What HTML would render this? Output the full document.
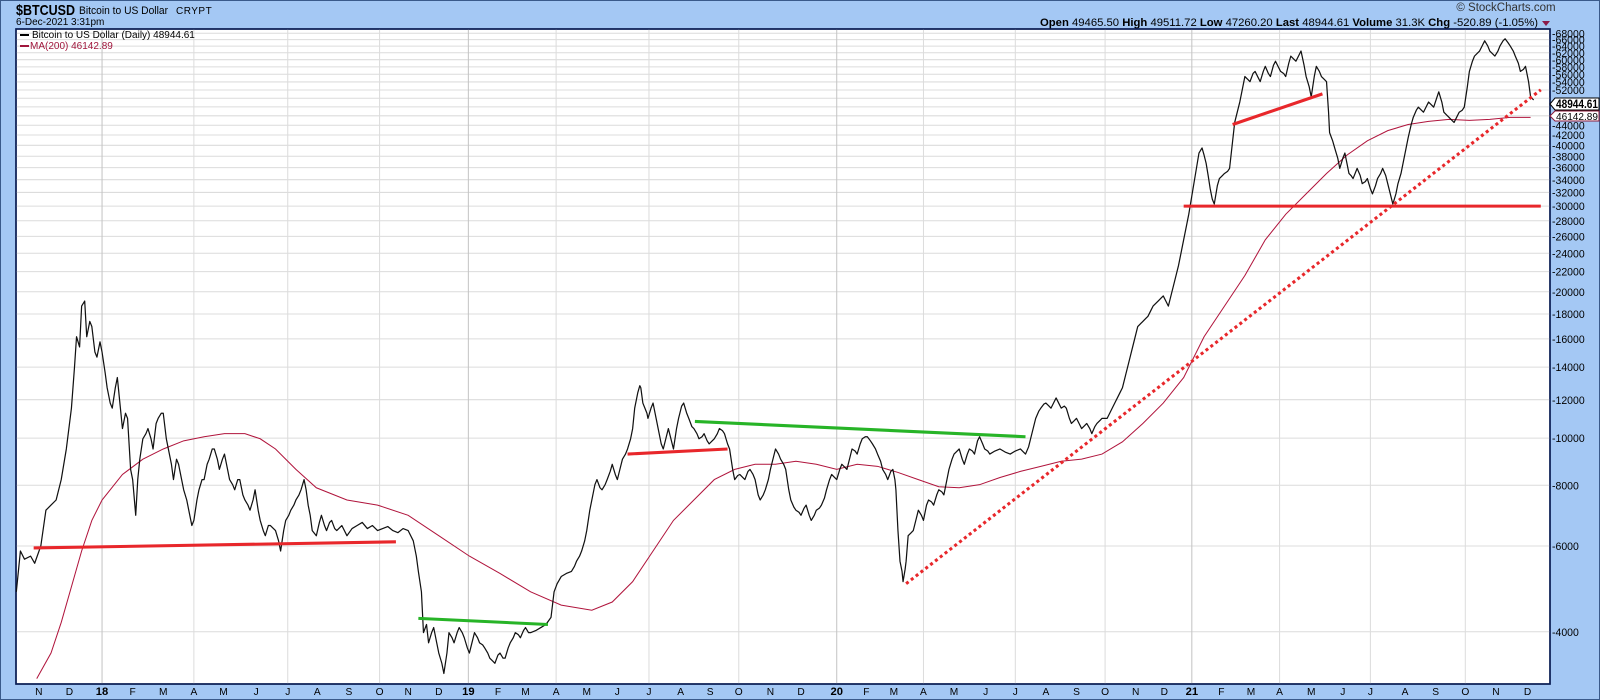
<!DOCTYPE html>
<html><head><meta charset="utf-8"><style>
html,body{margin:0;padding:0;width:1600px;height:700px;overflow:hidden;background:#a4c8f4;}
svg{display:block;font-family:"Liberation Sans",Arial,sans-serif;}
</style></head><body>
<svg width="1600" height="700" viewBox="0 0 1600 700" xmlns="http://www.w3.org/2000/svg">
<rect x="0" y="0" width="1600" height="700" fill="#a4c8f4"/>
<rect x="0.5" y="0.5" width="1599" height="699" fill="none" stroke="#3a5a8a"/>
<text x="16" y="15" font-size="15" font-weight="bold" fill="#000" textLength="59" lengthAdjust="spacingAndGlyphs">$BTCUSD</text>
<text x="79" y="14" font-size="11" fill="#000" textLength="89" lengthAdjust="spacingAndGlyphs">Bitcoin to US Dollar</text>
<text x="176" y="14" font-size="10" fill="#000" letter-spacing="0.5">CRYPT</text>
<text x="16" y="25" font-size="10" fill="#000">6-Dec-2021 3:31pm</text>
<text x="1506" y="11" font-size="11.5" fill="#333" text-anchor="middle">© StockCharts.com</text>
<text x="1040" y="26" font-size="11" fill="#000" textLength="498" lengthAdjust="spacingAndGlyphs"><tspan font-weight="bold">Open</tspan> 49465.50 <tspan font-weight="bold">High</tspan> 49511.72 <tspan font-weight="bold">Low</tspan> 47260.20 <tspan font-weight="bold">Last</tspan> 48944.61 <tspan font-weight="bold">Volume</tspan> 31.3K <tspan font-weight="bold">Chg</tspan> -520.89 (-1.05%)</text>
<path d="M1542 21 L1550 21 L1546 26 Z" fill="#8b1a4a"/>
<rect x="16" y="29" width="1534" height="655" fill="#fff" stroke="#0c1f55" stroke-width="1.5"/>
<g stroke="#dcdcdc" stroke-width="1" transform="matrix(1,0,0,1.0204,0,0)">
<line x1="16" x2="1550" y1="32.6" y2="32.6"/><line x1="16" x2="1550" y1="38.8" y2="38.8"/><line x1="16" x2="1550" y1="45.2" y2="45.2"/><line x1="16" x2="1550" y1="51.7" y2="51.7"/><line x1="16" x2="1550" y1="58.5" y2="58.5"/><line x1="16" x2="1550" y1="65.5" y2="65.5"/><line x1="16" x2="1550" y1="72.8" y2="72.8"/><line x1="16" x2="1550" y1="80.3" y2="80.3"/><line x1="16" x2="1550" y1="88.2" y2="88.2"/><line x1="16" x2="1550" y1="96.3" y2="96.3"/><line x1="16" x2="1550" y1="104.7" y2="104.7"/><line x1="16" x2="1550" y1="113.5" y2="113.5"/><line x1="16" x2="1550" y1="122.7" y2="122.7"/><line x1="16" x2="1550" y1="132.3" y2="132.3"/><line x1="16" x2="1550" y1="142.4" y2="142.4"/><line x1="16" x2="1550" y1="153.1" y2="153.1"/><line x1="16" x2="1550" y1="164.3" y2="164.3"/><line x1="16" x2="1550" y1="176.1" y2="176.1"/><line x1="16" x2="1550" y1="188.6" y2="188.6"/><line x1="16" x2="1550" y1="202" y2="202"/><line x1="16" x2="1550" y1="216.3" y2="216.3"/><line x1="16" x2="1550" y1="231.6" y2="231.6"/><line x1="16" x2="1550" y1="248.2" y2="248.2"/><line x1="16" x2="1550" y1="266.2" y2="266.2"/><line x1="16" x2="1550" y1="285.9" y2="285.9"/><line x1="16" x2="1550" y1="307.7" y2="307.7"/><line x1="16" x2="1550" y1="332.1" y2="332.1"/><line x1="16" x2="1550" y1="359.8" y2="359.8"/><line x1="16" x2="1550" y1="391.7" y2="391.7"/><line x1="16" x2="1550" y1="429.4" y2="429.4"/><line x1="16" x2="1550" y1="475.6" y2="475.6"/><line x1="16" x2="1550" y1="535.1" y2="535.1"/><line x1="16" x2="1550" y1="619.1" y2="619.1"/>
</g>
<g transform="matrix(1.0204,0,0,1,0,0)">
<g stroke="#dcdcdc">
<line y1="29" y2="684" x1="190" x2="190"/><line y1="29" y2="684" x1="282" x2="282"/><line y1="29" y2="684" x1="372" x2="372"/><line y1="29" y2="684" x1="545" x2="545"/><line y1="29" y2="684" x1="636" x2="636"/><line y1="29" y2="684" x1="724" x2="724"/><line y1="29" y2="684" x1="905" x2="905"/><line y1="29" y2="684" x1="995" x2="995"/><line y1="29" y2="684" x1="1083" x2="1083"/><line y1="29" y2="684" x1="1254" x2="1254"/><line y1="29" y2="684" x1="1343" x2="1343"/><line y1="29" y2="684" x1="1436" x2="1436"/>
</g>
<g stroke="#c4c4c4"><line y1="29" y2="684" x1="100" x2="100"/><line y1="29" y2="684" x1="459" x2="459"/><line y1="29" y2="684" x1="820" x2="820"/><line y1="29" y2="684" x1="1168" x2="1168"/></g>
<g font-size="10" fill="#000" text-anchor="middle">
<text x="38" y="695">N</text><text x="68" y="695">D</text><text x="100" y="695" font-weight="bold" font-size="11">18</text><text x="130" y="695">F</text><text x="160" y="695">M</text><text x="190" y="695">A</text><text x="219" y="695">M</text><text x="251" y="695">J</text><text x="282" y="695">J</text><text x="311" y="695">A</text><text x="342" y="695">S</text><text x="372" y="695">O</text><text x="400" y="695">N</text><text x="430" y="695">D</text><text x="459" y="695" font-weight="bold" font-size="11">19</text><text x="488" y="695">F</text><text x="515" y="695">M</text><text x="545" y="695">A</text><text x="575" y="695">M</text><text x="605" y="695">J</text><text x="636" y="695">J</text><text x="667" y="695">A</text><text x="696" y="695">S</text><text x="724" y="695">O</text><text x="755" y="695">N</text><text x="785" y="695">D</text><text x="820" y="695" font-weight="bold" font-size="11">20</text><text x="849" y="695">F</text><text x="876" y="695">M</text><text x="905" y="695">A</text><text x="935" y="695">M</text><text x="966" y="695">J</text><text x="995" y="695">J</text><text x="1025" y="695">A</text><text x="1055" y="695">S</text><text x="1083" y="695">O</text><text x="1113" y="695">N</text><text x="1141" y="695">D</text><text x="1168" y="695" font-weight="bold" font-size="11">21</text><text x="1197" y="695">F</text><text x="1226" y="695">M</text><text x="1254" y="695">A</text><text x="1285" y="695">M</text><text x="1316" y="695">J</text><text x="1343" y="695">J</text><text x="1377" y="695">A</text><text x="1407" y="695">S</text><text x="1436" y="695">O</text><text x="1466" y="695">N</text><text x="1497" y="695">D</text>
</g>
</g>
<rect x="16" y="29" width="1534" height="655" fill="none" stroke="#0c1f55" stroke-width="1.5"/>
<line x1="20" y1="35" x2="29" y2="35" stroke="#000" stroke-width="2"/>
<text x="32" y="38" font-size="10" fill="#000">Bitcoin to US Dollar (Daily) 48944.61</text>
<line x1="20" y1="46" x2="29" y2="46" stroke="#a0163c" stroke-width="2"/>
<text x="30" y="49" font-size="10" fill="#a0163c">MA(200) 46142.89</text>
<g transform="scale(1.0204)">
<polyline fill="none" stroke="#b0143c" stroke-width="1" points="36,665 50,640 60,610 70,575 80,540 90,510 100,490 120,465 140,450 160,440 180,432 200,428 220,425 240,425 255,430 270,440 290,460 310,478 340,490 370,495 400,505 430,525 460,545 490,562 520,580 550,593 580,598 600,590 620,570 640,540 660,510 680,490 700,470 720,460 740,455 760,455 780,452 800,455 820,460 840,455 860,457 880,463 900,470 920,477 940,478 960,475 980,468 1000,462 1020,457 1040,452 1060,450 1080,445 1100,433 1120,415 1140,395 1160,370 1180,330 1200,300 1220,270 1240,235 1260,210 1280,190 1300,170 1320,152 1340,138 1360,128 1380,122 1400,119 1420,117 1440,118 1460,117 1480,115 1500,115"/>
<polyline fill="none" stroke="#111" stroke-width="1.2" stroke-linejoin="round" points="16,580 20,540 24,548 30,545 34,552 40,535 45,500 50,495 55,490 60,470 65,440 70,400 73,360 75,330 78,340 80,300 83,295 85,330 88,315 90,320 93,345 95,350 98,335 100,345 103,365 105,380 108,395 110,400 113,380 115,370 118,400 120,420 123,405 125,410 128,460 130,470 133,505 135,470 137,450 140,430 143,425 145,420 148,430 150,440 153,415 155,410 158,405 160,405 163,430 165,440 168,455 170,470 173,450 175,455 178,470 180,480 183,490 185,500 188,515 190,510 193,490 195,480 198,470 200,470 203,455 205,450 208,440 210,440 213,450 215,460 218,450 220,445 223,460 225,470 228,475 230,480 233,470 235,470 238,485 240,490 243,495 245,500 248,490 250,480 253,500 255,510 258,520 260,525 263,515 265,515 268,518 270,520 273,530 275,540 278,520 280,510 283,505 285,500 288,495 290,490 293,485 295,480 298,470 300,480 302,495 304,505 306,520 310,525 313,512 315,505 318,515 320,520 323,512 325,510 328,518 330,520 335,515 340,525 345,518 350,515 355,512 360,518 365,515 370,520 375,518 380,516 385,520 390,522 395,518 400,520 405,530 408,545 410,560 413,580 415,620 418,612 420,630 423,620 425,615 428,630 430,640 433,650 435,660 438,640 440,620 443,625 445,630 448,620 450,615 453,620 455,625 458,635 460,640 463,628 465,620 468,625 470,630 473,632 475,635 478,640 480,645 483,648 485,650 488,642 490,640 493,645 495,645 498,635 500,630 503,625 505,620 508,622 510,625 513,618 515,615 518,620 520,620 525,618 530,615 535,612 540,605 543,580 546,572 550,565 555,562 560,560 563,555 565,550 568,545 570,540 573,530 575,520 578,500 580,490 583,475 585,470 588,478 590,480 593,475 595,470 598,462 600,455 603,465 605,470 608,458 610,450 613,445 615,440 618,430 620,420 622,400 625,385 627,378 628,380 630,395 632,400 634,405 635,410 638,400 640,395 643,410 645,420 648,435 650,440 653,428 655,420 658,432 660,440 663,420 665,410 668,398 670,395 673,405 675,410 678,418 680,420 683,425 685,430 688,428 690,425 693,432 695,435 698,432 700,430 703,425 705,420 708,422 710,425 713,435 715,440 718,460 720,470 723,466 725,465 728,468 730,470 733,462 735,460 738,465 740,470 743,485 745,490 748,485 750,480 753,470 755,460 758,448 760,440 763,445 765,450 768,455 770,460 773,480 775,490 778,497 780,500 783,502 785,505 788,498 790,495 793,505 795,510 798,505 800,500 803,498 805,495 808,488 810,480 813,470 815,465 818,468 820,470 823,460 825,455 828,458 830,460 833,448 835,440 838,442 840,445 843,435 845,430 848,428 850,428 853,432 855,435 858,440 860,445 863,452 865,460 868,465 870,470 873,462 875,460 877,470 878,480 880,520 882,550 884,560 885,570 887,558 888,550 890,525 893,522 895,520 898,508 900,500 903,505 905,510 908,495 910,490 913,492 915,495 918,485 920,480 923,482 925,485 928,470 930,460 933,450 935,445 938,442 940,440 943,450 945,455 948,445 950,440 953,442 955,445 958,432 960,428 963,435 965,440 968,442 970,445 975,442 980,440 985,443 990,445 995,442 1000,440 1003,443 1005,445 1008,438 1010,430 1013,418 1015,410 1018,403 1020,400 1023,396 1025,395 1028,398 1030,400 1033,394 1035,390 1038,396 1040,400 1043,398 1045,400 1048,410 1050,415 1053,412 1055,410 1058,416 1060,420 1063,417 1065,415 1068,420 1070,425 1073,418 1075,415 1078,412 1080,410 1083,410 1085,410 1088,404 1090,400 1093,394 1095,390 1098,384 1100,380 1103,368 1105,360 1108,348 1110,340 1113,328 1115,320 1118,317 1120,315 1123,312 1125,310 1128,304 1130,300 1133,297 1135,295 1138,292 1140,290 1143,296 1145,300 1148,288 1150,280 1153,268 1155,260 1158,245 1160,235 1163,220 1165,210 1168,192 1170,180 1173,162 1175,150 1178,145 1180,152 1182,160 1184,172 1186,185 1188,195 1190,200 1193,182 1195,175 1198,172 1200,170 1203,168 1205,165 1208,138 1210,120 1213,108 1215,100 1218,85 1220,75 1223,78 1225,80 1228,72 1230,70 1233,76 1235,80 1238,70 1240,65 1243,72 1245,75 1248,64 1250,60 1253,66 1255,70 1258,72 1260,75 1263,62 1265,55 1268,58 1270,60 1273,54 1275,50 1278,64 1280,75 1283,85 1285,95 1288,75 1290,65 1293,70 1295,75 1298,78 1300,80 1302,110 1303,130 1306,138 1308,145 1311,155 1313,165 1316,155 1318,150 1320,160 1322,170 1324,172 1326,175 1328,170 1330,165 1333,172 1335,180 1338,178 1340,175 1343,185 1345,190 1348,182 1350,175 1353,170 1355,165 1358,172 1360,180 1363,192 1365,200 1368,190 1370,180 1373,170 1375,160 1378,145 1380,135 1383,122 1385,115 1388,108 1390,105 1393,108 1395,110 1398,104 1400,100 1403,103 1405,105 1408,96 1410,90 1413,100 1415,110 1418,113 1420,115 1423,118 1425,120 1428,114 1430,110 1433,108 1435,105 1438,85 1440,70 1443,60 1445,55 1448,52 1450,50 1453,44 1455,40 1458,45 1460,50 1463,53 1465,55 1468,50 1470,45 1473,40 1475,38 1478,42 1480,45 1483,50 1485,55 1488,62 1490,70 1493,68 1495,65 1498,80 1500,95 1503,98"/>
<g stroke-width="3" stroke-linecap="butt">
<line x1="33" y1="537" x2="388" y2="531" stroke="#e8272b"/>
<line x1="615" y1="445" x2="713" y2="440" stroke="#e8272b"/>
<line x1="1208" y1="122" x2="1296" y2="92" stroke="#e8272b"/>
<line x1="1160" y1="202" x2="1510" y2="202" stroke="#e8272b"/>
<line x1="681" y1="413" x2="1005" y2="428" stroke="#27b427"/>
<line x1="410" y1="606" x2="537" y2="612" stroke="#27b427"/>
<line x1="888" y1="572" x2="1510" y2="88" stroke="#e8272b" stroke-dasharray="3,3"/>
</g>
</g>
<g font-size="10.5" fill="#000" transform="matrix(1,0,0,1.0204,0,0)">
<text x="1552" y="36.6">-68000</text><text x="1552" y="42.8">-66000</text><text x="1552" y="49.2">-64000</text><text x="1552" y="55.7">-62000</text><text x="1552" y="62.5">-60000</text><text x="1552" y="69.5">-58000</text><text x="1552" y="76.8">-56000</text><text x="1552" y="84.3">-54000</text><text x="1552" y="92.2">-52000</text>
<text x="1552" y="126.7">-44000</text><text x="1552" y="136.3">-42000</text><text x="1552" y="146.4">-40000</text><text x="1552" y="157.1">-38000</text><text x="1552" y="168.3">-36000</text><text x="1552" y="180.1">-34000</text><text x="1552" y="192.6">-32000</text><text x="1552" y="206">-30000</text><text x="1552" y="220.3">-28000</text><text x="1552" y="235.6">-26000</text><text x="1552" y="252.2">-24000</text><text x="1552" y="270.2">-22000</text><text x="1552" y="289.9">-20000</text><text x="1552" y="311.7">-18000</text><text x="1552" y="336.1">-16000</text><text x="1552" y="363.8">-14000</text><text x="1552" y="395.7">-12000</text><text x="1552" y="433.4">-10000</text><text x="1552" y="479.6">-8000</text><text x="1552" y="539.1">-6000</text><text x="1552" y="623.1">-4000</text>
</g>
<path d="M1550 104 L1555 98 L1599 98 L1599 110 L1555 110 Z" fill="#fff" stroke="#000"/>
<text x="1556" y="108" font-size="11.5" font-weight="bold" fill="#000" textLength="42" lengthAdjust="spacingAndGlyphs">48944.61</text>
<path d="M1550 116 L1555 111 L1599 111 L1599 121 L1555 121 Z" fill="#fff" stroke="#8b1a3a"/>
<text x="1556" y="120" font-size="10.5" fill="#000" textLength="42" lengthAdjust="spacingAndGlyphs">46142.89</text>
</svg>
</body></html>
